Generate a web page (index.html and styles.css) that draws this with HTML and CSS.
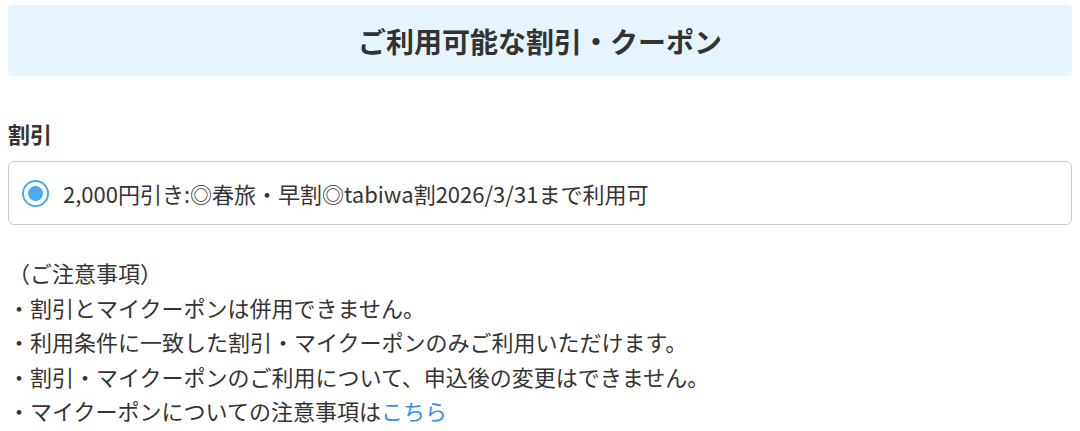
FILE: index.html
```html
<!DOCTYPE html>
<html lang="ja">
<head>
<meta charset="utf-8">
<link rel="stylesheet" href="styles.css">
</head>
<body>
<div class="page">
  <div class="header">ご利用可能な割引・クーポン</div>
  <div class="label">割引</div>
  <label class="option">
    <span class="radio"><span class="dot"></span></span>
    <span class="option-text">2,000円引き:◎春旅・早割◎tabiwa割2026/3/31まで利用可</span>
  </label>
  <div class="notes">
    <p>（ご注意事項）</p>
    <p>・割引とマイクーポンは併用できません。</p>
    <p>・利用条件に一致した割引・マイクーポンのみご利用いただけます。</p>
    <p>・割引・マイクーポンのご利用について、申込後の変更はできません。</p>
    <p>・マイクーポンについての注意事項は<a class="link" href="#">こちら</a></p>
  </div>
</div>
</body>
</html>
```

FILE: styles.css
```css
html, body {
  margin: 0;
  padding: 0;
  background: #ffffff;
}
body {
  font-family: "Noto Sans CJK JP", "Noto Sans", sans-serif;
  color: #333333;
}
.page {
  padding: 5px 8px 0 8px;
}
.header {
  height: 71px;
  background: #e6f4fe;
  border-radius: 4px;
  display: flex;
  align-items: center;
  justify-content: center;
  font-size: 28px;
  font-weight: 700;
  color: #333333;
}
.label {
  margin-top: 41px;
  font-size: 22px;
  font-weight: 700;
  line-height: 33px;
}
.option {
  margin-top: 11px;
  height: 62px;
  border: 1px solid #c9c9c9;
  border-radius: 6px;
  display: flex;
  align-items: center;
  padding-left: 13px;
  gap: 14px;
}
.radio {
  width: 27px;
  height: 27px;
  box-sizing: border-box;
  border: 2px solid #4ea8ee;
  border-radius: 50%;
  display: flex;
  align-items: center;
  justify-content: center;
  flex: none;
}
.dot {
  width: 15px;
  height: 15px;
  border-radius: 50%;
  background: #4ea8ee;
}
.option-text {
  font-size: 22px;
  line-height: 30px;
}
.notes {
  margin-top: 30px;
  font-size: 22px;
  line-height: 34.5px;
}
.notes p {
  margin: 0;
}
.link {
  color: #3a8ee6;
  text-decoration: none;
}
```
